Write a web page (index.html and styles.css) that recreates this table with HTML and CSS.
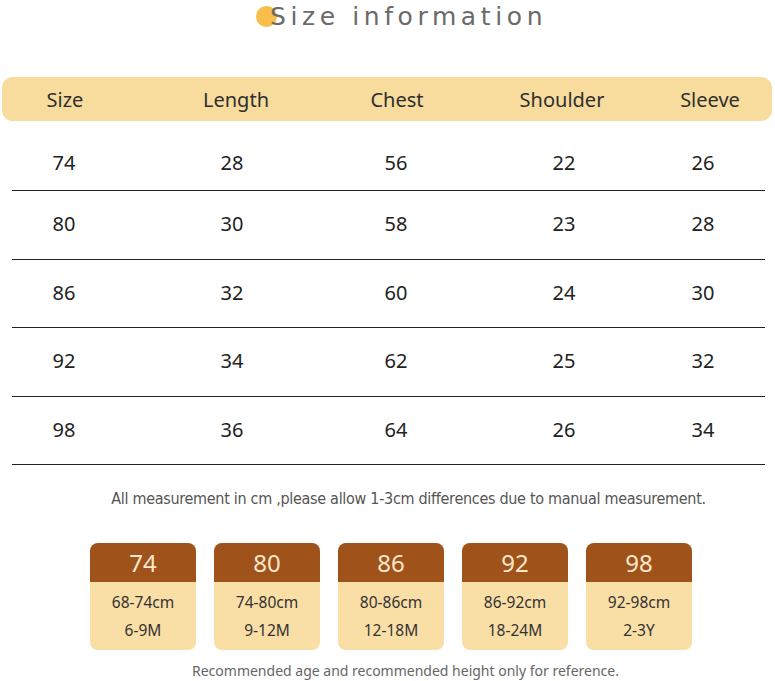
FILE: index.html
```html
<!DOCTYPE html>
<html>
<head>
<meta charset="utf-8">
<link rel="stylesheet" href="styles.css">
</head>
<body>
<div class="page">
  <h1 class="title"><span class="dot"></span><span class="title-text">Size information</span></h1>
  <div class="table">
    <div class="head">
      <span>Size</span><span>Length</span><span>Chest</span><span>Shoulder</span><span>Sleeve</span>
    </div>
    <div class="row first"><span>74</span><span>28</span><span>56</span><span>22</span><span>26</span></div>
    <div class="row"><span>80</span><span>30</span><span>58</span><span>23</span><span>28</span></div>
    <div class="row"><span>86</span><span>32</span><span>60</span><span>24</span><span>30</span></div>
    <div class="row"><span>92</span><span>34</span><span>62</span><span>25</span><span>32</span></div>
    <div class="row"><span>98</span><span>36</span><span>64</span><span>26</span><span>34</span></div>
  </div>
  <p class="note">All measurement in cm ,please allow 1-3cm differences due to manual measurement.</p>
  <div class="cards">
    <div class="card"><div class="card-top">74</div><div class="card-body"><span>68-74cm</span><span>6-9M</span></div></div>
    <div class="card"><div class="card-top">80</div><div class="card-body"><span>74-80cm</span><span>9-12M</span></div></div>
    <div class="card"><div class="card-top">86</div><div class="card-body"><span>80-86cm</span><span>12-18M</span></div></div>
    <div class="card"><div class="card-top">92</div><div class="card-body"><span>86-92cm</span><span>18-24M</span></div></div>
    <div class="card"><div class="card-top">98</div><div class="card-body"><span>92-98cm</span><span>2-3Y</span></div></div>
  </div>
  <p class="foot">Recommended age and recommended height only for reference.</p>
</div>
</body>
</html>
```
FILE: styles.css
```css
* { box-sizing: border-box; }
html, body { margin: 0; padding: 0; background: #fff; }
body { font-family: "Noto Sans", "Open Sans", sans-serif; color: #333; }
.page { width: 775px; height: 681px; overflow: hidden; }

.title {
  margin: 0;
  height: 34px;
  display: flex;
  align-items: center;
  justify-content: center;
  padding: 0 0 1px 28px;
  font-weight: normal;
}
.dot {
  width: 21px; height: 21px; border-radius: 50%;
  background: #f7be4a;
  margin-right: -7px;
  margin-left: 0;
}
.title-text {
  font-family: "DejaVu Sans", sans-serif;
  font-size: 25px;
  letter-spacing: 4.6px;
  color: #6a6a6a;
  position: relative;
}

.table { margin-top: 43px; }
.head {
  margin: 0 3px 0 2px;
  height: 44px;
  background: #f8dc9e;
  border-radius: 11px;
  display: grid;
  grid-template-columns: 126px 216px 106px 224px 72px;
  align-items: center;
  font-size: 20px;
  color: #2e2e2e;
}
.head span, .row span { text-align: center; }
.row {
  margin: 0 10px 0 12px;
  height: 68.5px;
  border-bottom: 1.5px solid #222;
  display: grid;
  grid-template-columns: 104px 232px 96px 240px 38px;
  align-items: center;
  font-size: 20px;
  color: #222;
  padding-bottom: 2px;
}
.row.first { height: 70px; padding-top: 15px; }

.note {
  margin: 24px 0 0 0;
  padding-left: 42px;
  text-align: center;
  font-family: "DejaVu Sans Condensed", "DejaVu Sans", sans-serif;
  font-size: 16px;
  color: #555;
  letter-spacing: -0.3px;
}

.cards {
  margin-top: 35px;
  padding-left: 90px;
  display: flex;
  gap: 18px;
}
.card {
  width: 106px;
  height: 107px;
  border-radius: 8px;
  overflow: hidden;
  background: #f9dea6;
  display: flex;
  flex-direction: column;
}
.card-top {
  height: 39px;
  background: #a0521b;
  color: #fbe8cc;
  font-size: 24px;
  display: flex;
  align-items: center;
  justify-content: center;
}
.card-body {
  flex: 1;
  display: flex;
  flex-direction: column;
  align-items: center;
  justify-content: center;
  gap: 6px;
  font-size: 15.5px;
  color: #333;
  padding-bottom: 1px;
}
.foot {
  margin: 11px 0 0 0;
  text-align: center;
  padding-left: 36px;
  font-size: 14px;
  color: #666;
}
```
